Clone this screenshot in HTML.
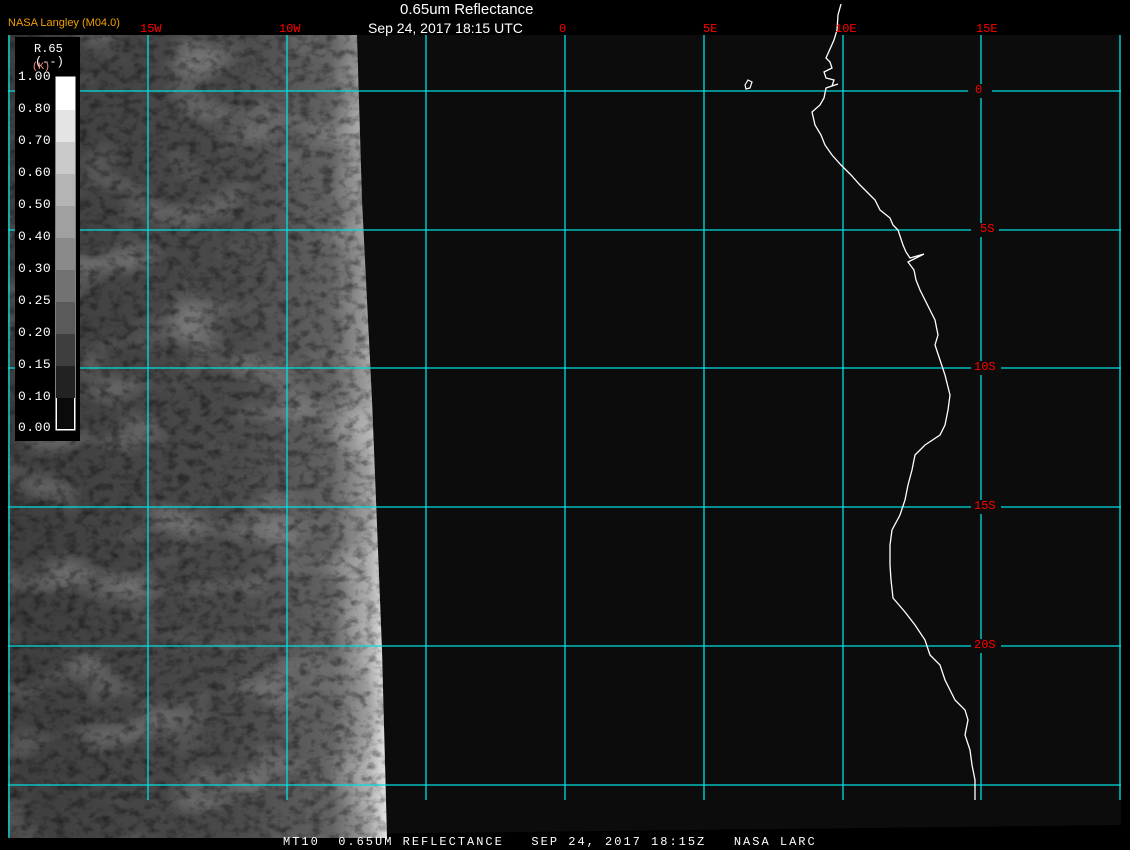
<!DOCTYPE html>
<html><head><meta charset="utf-8"><style>
body{margin:0;background:#000;width:1130px;height:850px;overflow:hidden;position:relative;font-family:"Liberation Mono",monospace}
.t{position:absolute;white-space:pre}
</style></head><body>
<svg width="1130" height="850" style="position:absolute;left:0;top:0">
<defs>
<filter id="n" x="0" y="0" width="100%" height="100%">
<feTurbulence type="fractalNoise" baseFrequency="0.09 0.12" numOctaves="4" seed="7"/>
<feColorMatrix type="matrix" values="0 0 0 0 0  0 0 0 0 0  0 0 0 0 0  0 0 0 -1.8 1.0"/>
</filter>
<filter id="m" x="0" y="0" width="100%" height="100%">
<feTurbulence type="fractalNoise" baseFrequency="0.012 0.02" numOctaves="2" seed="2"/>
<feColorMatrix type="matrix" values="0 0 0 0 1  0 0 0 0 1  0 0 0 0 1  0 0 0 2.2 -1.1"/>
</filter>
<clipPath id="c"><polygon points="8,35 357,35 362,200 372,400 382,650 387,838 8,838"/></clipPath>
<linearGradient id="g" x1="0" x2="1" y1="0" y2="0">
<stop offset="0" stop-color="#3e3e3e"/><stop offset="0.6" stop-color="#4a4a4a"/><stop offset="0.85" stop-color="#626262"/><stop offset="0.95" stop-color="#a0a0a0"/><stop offset="1" stop-color="#e6e6e6"/>
</linearGradient>
</defs>
<polygon points="8,35 1121,35 1121,825 8,838" fill="#0c0c0c"/>
<g clip-path="url(#c)">
<rect x="8" y="35" width="380" height="803" fill="url(#g)"/>
<rect x="8" y="35" width="380" height="803" filter="url(#m)" opacity="0.35"/>
<rect x="8" y="35" width="380" height="803" fill="#000" filter="url(#n)" opacity="0.55"/>
</g>
<g stroke="#00e0e0" stroke-width="1.3">
<line x1="9" y1="35" x2="9" y2="838"/>
<line x1="148" y1="35" x2="148" y2="800"/><line x1="287" y1="35" x2="287" y2="800"/>
<line x1="426" y1="35" x2="426" y2="800"/><line x1="565" y1="35" x2="565" y2="800"/>
<line x1="704" y1="35" x2="704" y2="800"/><line x1="843" y1="35" x2="843" y2="800"/>
<line x1="981" y1="35" x2="981" y2="800"/><line x1="1120" y1="35" x2="1120" y2="800"/>
<line x1="8" y1="91" x2="1121" y2="91"/><line x1="8" y1="230" x2="1121" y2="230"/>
<line x1="8" y1="368" x2="1121" y2="368"/><line x1="8" y1="507" x2="1121" y2="507"/>
<line x1="8" y1="646" x2="1121" y2="646"/><line x1="8" y1="785" x2="1121" y2="785"/>
</g>
<g fill="#0c0c0c"><rect x="968" y="84" width="24" height="14"/><rect x="971" y="223" width="28" height="14"/><rect x="971" y="361" width="30" height="14"/><rect x="971" y="500" width="30" height="14"/><rect x="971" y="639" width="30" height="14"/></g>
<polyline fill="none" stroke="#fff" stroke-width="1.3" points="841,4 838,15 837,30 834,40 826,58 830,62 832,68 824,72 826,78 834,80 832,86 838,84 826,88 824,98 820,105 812,112 815,125 821,135 825,145 832,155 841,165 851,175 860,185 868,193 875,200 880,210 890,218 893,225 898,230 903,245 906,252 910,258 924,254 912,260 908,262 914,270 916,280 920,290 925,300 930,310 935,320 938,335 935,345 940,360 945,375 950,395 948,410 945,425 940,435 925,445 915,455 912,470 908,485 905,500 900,515 892,530 890,545 890,565 891,580 893,598 905,612 915,625 925,640 930,655 940,665 945,680 955,700 965,710 968,720 965,735 970,750 972,765 975,780 975,800"/>
<polygon points="745,85 748,80 752,82 750,88 746,89" fill="none" stroke="#fff" stroke-width="1.2"/>
<rect x="15" y="37" width="65" height="404" fill="#000"/>
<rect x="56" y="77" width="19" height="353" fill="#fff" stroke="#fff"/>
<g>
<rect x="56" y="110" width="19" height="32" fill="#e4e4e4"/><rect x="56" y="142" width="19" height="32" fill="#cacaca"/>
<rect x="56" y="174" width="19" height="32" fill="#b4b4b4"/><rect x="56" y="206" width="19" height="32" fill="#a0a0a0"/>
<rect x="56" y="238" width="19" height="32" fill="#8a8a8a"/><rect x="56" y="270" width="19" height="32" fill="#727272"/>
<rect x="56" y="302" width="19" height="32" fill="#5a5a5a"/><rect x="56" y="334" width="19" height="32" fill="#3e3e3e"/>
<rect x="56" y="366" width="19" height="32" fill="#222"/><rect x="57" y="398" width="17" height="31" fill="#0a0a0a"/>
</g>
</svg>
<div class="t" style="left:400px;top:1px;color:#fff;font:15px 'Liberation Sans',sans-serif">0.65um Reflectance</div>
<div class="t" style="left:368px;top:20px;color:#fff;font:14px 'Liberation Sans',sans-serif">Sep 24, 2017 18:15 UTC</div>
<div class="t" style="left:8px;top:17px;color:#f0a000;font:11px 'Liberation Sans',sans-serif">NASA Langley (M04.0)</div>
<div style="color:#f00;font-size:12px">
<div class="t" style="left:140px;top:22px">15W</div><div class="t" style="left:279px;top:22px">10W</div>
<div class="t" style="left:559px;top:22px">0</div><div class="t" style="left:703px;top:22px">5E</div>
<div class="t" style="left:835px;top:22px">10E</div><div class="t" style="left:976px;top:22px">15E</div>
<div class="t" style="left:975px;top:83px">0</div><div class="t" style="left:980px;top:222px">5S</div>
<div class="t" style="left:974px;top:360px">10S</div><div class="t" style="left:974px;top:499px">15S</div><div class="t" style="left:974px;top:638px">20S</div>
</div>
<div class="t" style="left:34px;top:42px;color:#fff;font-size:12px">R.65</div>
<div class="t" style="left:35px;top:55px;color:#fff;font-size:12px">(--)</div>
<div class="t" style="left:32px;top:62px;color:#f98;font-size:10px">(K)</div>
<div style="color:#fff;font-size:13px;letter-spacing:0.5px">
<div class="t" style="left:18px;top:69px">1.00</div><div class="t" style="left:18px;top:101px">0.80</div>
<div class="t" style="left:18px;top:133px">0.70</div><div class="t" style="left:18px;top:165px">0.60</div>
<div class="t" style="left:18px;top:197px">0.50</div><div class="t" style="left:18px;top:229px">0.40</div>
<div class="t" style="left:18px;top:261px">0.30</div><div class="t" style="left:18px;top:293px">0.25</div>
<div class="t" style="left:18px;top:325px">0.20</div><div class="t" style="left:18px;top:357px">0.15</div>
<div class="t" style="left:18px;top:389px">0.10</div><div class="t" style="left:18px;top:420px">0.00</div>
</div>
<div class="t" style="left:283px;top:835px;color:#fff;font-size:12px;letter-spacing:2px">MT10  0.65UM REFLECTANCE   SEP 24, 2017 18:15Z   NASA LARC</div>
</body></html>
